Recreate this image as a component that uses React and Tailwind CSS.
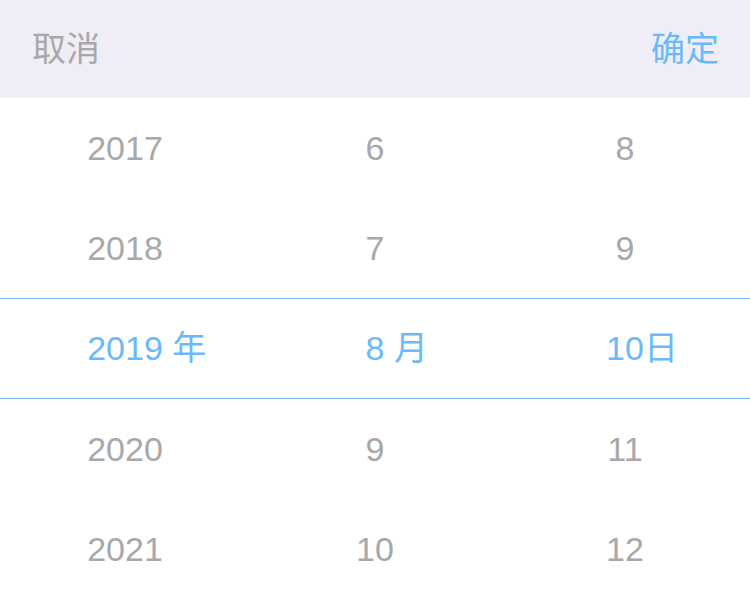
import React from 'react';

const font = { fontFamily: '"Liberation Sans", "Noto Sans CJK SC", sans-serif' };

const columns = [
  { values: ['2017', '2018', '2019', '2020', '2021'], suffix: ' 年' },
  { values: ['6', '7', '8', '9', '10'], suffix: ' 月' },
  { values: ['8', '9', '10', '11', '12'], suffix: '日' },
];

function Cell({ value, suffix, selected }) {
  return (
    <div className="flex-1 flex items-center justify-center">
      <span className={selected ? 'text-[#6ab9fb]' : 'text-[#a8a8a8]'}>
        {value}
        {selected && (
          <span className="inline-block w-0 whitespace-pre overflow-visible">{suffix}</span>
        )}
      </span>
    </div>
  );
}

export default function App() {
  const rows = [0, 1, 2, 3, 4];

  return (
    <div className="w-[750px] h-[599px] bg-white overflow-hidden" style={font}>
      {/* Toolbar */}
      <div className="h-[98px] bg-[#efedf5] flex items-center justify-between pl-[32px] pr-[31px] text-[34px]">
        <button className="text-[#a8a8a8]">取消</button>
        <button className="text-[#6ab9fb]">确定</button>
      </div>

      {/* Picker rows */}
      <div className="text-[34px]">
        {rows.map((r) => {
          const selected = r === 2;
          return (
            <div
              key={r}
              className={
                selected
                  ? 'h-[101px] flex border-y border-[#74bdf6]'
                  : 'h-[100px] flex'
              }
            >
              {columns.map((col, i) => (
                <Cell key={i} value={col.values[r]} suffix={col.suffix} selected={selected} />
              ))}
            </div>
          );
        })}
      </div>
    </div>
  );
}
